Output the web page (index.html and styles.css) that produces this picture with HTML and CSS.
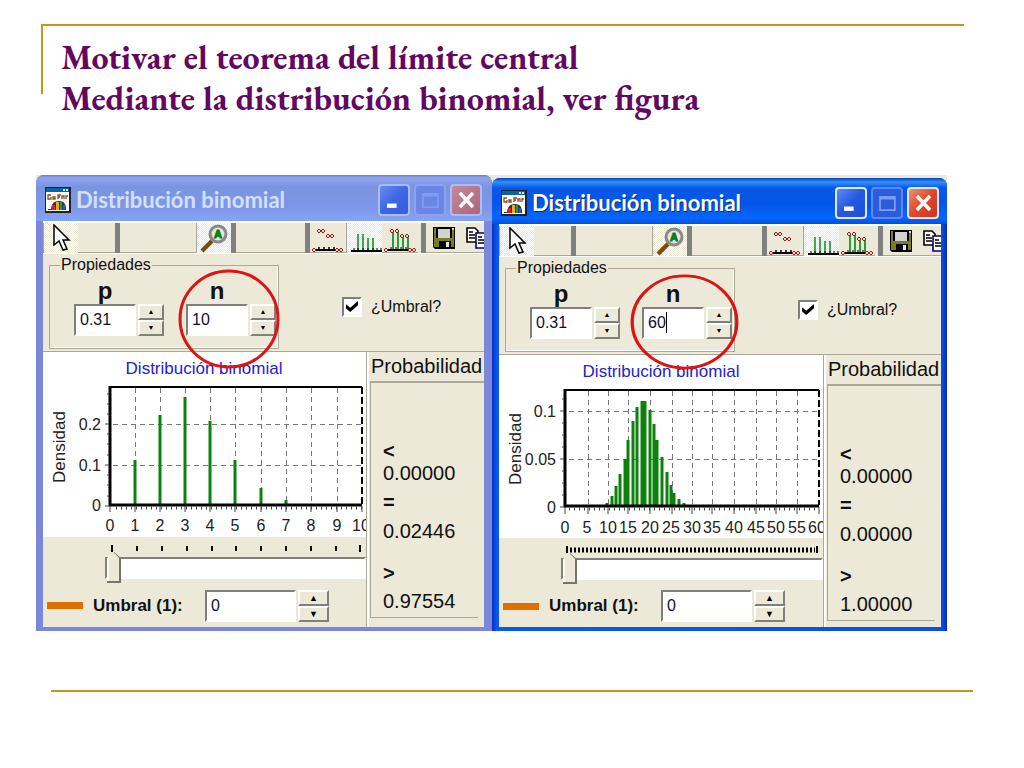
FILE: index.html
```
<!DOCTYPE html>
<html lang="es">
<head>
<meta charset="utf-8">
<title>Distribución binomial</title>
<link rel="stylesheet" href="styles.css">
</head>
<body>

<svg class="defs" width="0" height="0">
<symbol id="app" viewBox="0 0 26 26">
<rect width="26" height="26" fill="#222"/><rect x="1" y="1" width="23" height="23" fill="#fff"/>
<rect x="1" y="1" width="23" height="4" fill="#0a63a5"/><path d="M18 2h2v2h-2zM21 2h2v2h-2z" fill="#cfe4f4"/>
<path d="M6 8H3v4h3v-2M8 10h2v2h-2zM13 12V8h3M13 10h2M17 12v-3h2v3M21 12V9h2" fill="none" stroke="#8a4a26" stroke-width="1.3"/>
<path d="M6 23c0-5 2-9 8-9s7 4 7 9z" fill="#333"/>
<path d="M7 18h3v5H7z" fill="#d22"/><path d="M11 15h3v8h-3z" fill="#e8b020"/><path d="M15 15h2v8h-2z" fill="#2a9a4a"/><path d="M18 18h2v5h-2z" fill="#2a5ad0"/>
<path d="M3 22h3v1H3z" fill="#333"/>
</symbol>
<symbol id="arrow" viewBox="0 0 20 28">
<path d="M3 1v20l5-4 4 9 4-1-4-9h6z" fill="#fff" stroke="#000" stroke-width="1.5"/>
</symbol>
<symbol id="lens" viewBox="0 0 30 30">
<path d="M3 28 13 18" stroke="#7a4a0c" stroke-width="4"/><path d="M2 26 12 16" stroke="#c48a38"/>
<circle cx="19" cy="11" r="8" fill="#e8e8d8" stroke="#888" stroke-width="3"/>
</symbol>
<symbol id="points" viewBox="0 0 34 30">
<path d="M4 27h25" stroke="#000" stroke-width="2"/><path d="M8 24v3M13 24v3M18 24v3M23 24v3" stroke="#000" stroke-width="1.5"/>
<path d="M6 8l2-2 2 2-2 2zM10 8l2-2 2 2-2 2zM15 13l2-2 2 2-2 2zM19 13l2-2 2 2-2 2zM1 27l2-2 2 2-2 2zM24 27l2-2 2 2-2 2zM28 27l2-2 2 2-2 2z" fill="#f4d8cc" stroke="#a01818"/>
</symbol>
<symbol id="stems" viewBox="0 0 34 30">
<path d="M10 11v16M15 11v16M20 15v12M25 15v12" stroke="#18942a" stroke-width="1.6"/>
<path d="M3 28h31" stroke="#000" stroke-width="2"/><path d="M6 25v3M10 25v3M15 25v3M20 25v3M25 25v3M29 25v3M33 25v3" stroke="#000"/>
</symbol>
<symbol id="both" viewBox="0 0 34 30">
<path d="M10 9v17M15 9v17M20 14v12M25 14v12" stroke="#18942a" stroke-width="1.8"/>
<path d="M4 27h25" stroke="#000" stroke-width="2"/><path d="M8 24v3M13 24v3M18 24v3M23 24v3" stroke="#000"/>
<path d="M7 8l2-2 2 2-2 2zM12 8l2-2 2 2-2 2zM17 13l2-2 2 2-2 2zM22 13l2-2 2 2-2 2zM1 27l2-2 2 2-2 2zM25 27l2-2 2 2-2 2zM29 27l2-2 2 2-2 2z" fill="#f4d8cc" stroke="#a01818"/>
</symbol>
<symbol id="save" viewBox="0 0 22 22">
<path d="M0 0h22v22H2l-2-2z" fill="#000"/><path d="M1 1h2v19H1zM19 3h2v17h-2zM3 11h16v2H3z" fill="#7c7c20"/>
<path d="M5 2h12v9H5z" fill="#d2d2d2"/><path d="M3 13h16v7H3z" fill="#7c7c20"/><path d="M6 14h12v7H6z" fill="#000"/><path d="M13 15h3v5h-3z" fill="#e8e8e8"/>
<path d="M19 1h2v2h-2z" fill="#d2d2d2"/>
</symbol>
<symbol id="copy" viewBox="0 0 22 22">
<path d="M1 1h8l3 3v11H1z" fill="#fff" stroke="#000" stroke-width="1.6"/><path d="M3 5h4M3 8h6M3 11h6" stroke="#000" stroke-width="1.4"/>
<path d="M10 6h8l4 4v11H10z" fill="#fff" stroke="#000080" stroke-width="1.6"/><path d="M12 10h4M12 13h8M12 16h8" stroke="#000" stroke-width="1.4"/>
</symbol>
</svg>

<header class="heading">
<h1>Motivar el teorema del límite central<br>Mediante la distribución binomial, ver figura</h1>
</header>

<main class="figure">

<section class="window inactive">
<div class="titlebar">
<svg class="app"><use href="#app"/></svg>
<h2>Distribución binomial</h2>
<button class="cap" aria-label="Minimizar"><svg viewBox="0 0 32 32"><path d="M8 20h11v5H8z" fill="#fff"/></svg></button>
<button class="cap max" aria-label="Maximizar"><svg viewBox="0 0 32 32"><path d="M8 9h17v15H8zM8 11h17" fill="none" stroke="#7f9cf2" stroke-width="2"/></svg></button>
<button class="cap close" aria-label="Cerrar"><svg viewBox="0 0 32 32"><path d="M9 8 24 24M24 8 9 24" stroke="#fff" stroke-width="4"/></svg></button>
</div>
<div class="client">
<div class="toolbar">
<button class="tool on" aria-label="Puntero"><svg class="i-arrow"><use href="#arrow"/></svg></button>
<span class="blank short"></span><span class="sep"></span><span class="blank long"></span>
<button class="tool on" aria-label="Lupa"><svg class="i-lens"><use href="#lens"/><text x="19" y="15">A</text></svg></button>
<span class="sep"></span><span class="blank"></span><span class="sep"></span>
<button class="tool wider" aria-label="Puntos"><svg class="i-graph"><use href="#points"/></svg></button>
<button class="tool wider on" aria-label="Barras"><svg class="i-graph"><use href="#stems"/></svg></button>
<button class="tool wider" aria-label="Puntos y barras"><svg class="i-graph"><use href="#both"/></svg></button>
<span class="sep last"></span>
<button class="tool wider" aria-label="Guardar"><svg class="i-file"><use href="#save"/></svg></button>
<button class="tool half" aria-label="Copiar"><svg class="i-file"><use href="#copy"/></svg></button>
</div>
<div class="props">
<fieldset>
<legend>Propiedades</legend>
<div class="param"><label for="p1">p</label>
<div class="spin"><input id="p1" type="text" value="0.31"><div class="arrows"><button aria-label="Más">▲</button><button aria-label="Menos">▼</button></div></div></div>
<div class="param"><label for="n1">n</label>
<div class="spin"><input id="n1" type="text" value="10"><div class="arrows"><button aria-label="Más">▲</button><button aria-label="Menos">▼</button></div></div></div>
</fieldset>
<label class="check"><input type="checkbox" checked> ¿Umbral?</label>
<svg class="ring" viewBox="0 0 100 100" preserveAspectRatio="none"><ellipse cx="50" cy="50" rx="48" ry="48"/></svg>
</div>
<div class="lower">
<div class="left">
<svg class="chart" viewBox="0 0 324 185" preserveAspectRatio="xMinYMin slice">
<text class="name" x="161" y="22">Distribución binomial</text>
<text class="name dens" transform="translate(22 95) rotate(-90)">Densidad</text>
<path class="grid" d="M92 36V152M117 36V152M142 36V152M167 36V152M192 36V152M218 36V152M243 36V152M268 36V152M294 36V152M70 72H318M70 113H318"/>
<path class="frame" d="M67 35H319"/><path class="frame dash" d="M319 35V152"/>
<path class="bars" d="M92 152V108M117 152V63M142 152V45M167 152V69M192 152V108M218 152V136M243 152V148"/>
<path class="axis" d="M67 34V153H319"/>
<path class="minor" d="M73 156H319"/>
<path class="tick" d="M62 72H66M62 113H66M62 154H66M64 42H66M64 52H66M64 62H66M64 82H66M64 92H66M64 103H66M64 123H66M64 133H66M64 144H66M67 154V160M92 154V160M117 154V160M142 154V160M167 154V160M192 154V160M218 154V160M243 154V160M268 154V160M294 154V160M319 154V160"/>
<g class="ylab"><text x="58" y="78">0.2</text><text x="58" y="119">0.1</text><text x="58" y="159">0</text></g>
<g class="xlab"><text x="67" y="179">0</text><text x="92" y="179">1</text><text x="117" y="179">2</text><text x="142" y="179">3</text><text x="167" y="179">4</text><text x="192" y="179">5</text><text x="218" y="179">6</text><text x="243" y="179">7</text><text x="268" y="179">8</text><text x="294" y="179">9</text><text x="318" y="179">10</text></g>
</svg>
<div class="slider">
<svg class="marks" viewBox="0 0 324 15" preserveAspectRatio="xMinYMin slice"><path d="M69 8v7M94 9v5M119 9v5M144 9v5M169 9v5M193 9v5M218 9v5M243 9v5M268 9v5M293 9v5M317 8v7"/></svg>
<input type="range" min="0" max="10" value="0" aria-label="Umbral">
</div>
<div class="threshold">
<span class="key"></span><label for="u1">Umbral (1):</label>
<div class="spin wide"><input id="u1" type="text" value="0"><div class="arrows"><button aria-label="Más">▲</button><button aria-label="Menos">▼</button></div></div>
</div>
</div>
<div class="prob">
<h3>Probabilidad</h3>
<dl>
<dt>&lt;</dt><dd>0.00000</dd>
<dt class="eq">=</dt><dd class="mid">0.02446</dd>
<dt class="gt">&gt;</dt><dd>0.97554</dd>
</dl>
</div>
</div>
</div>
</section>

<section class="window active">
<div class="titlebar">
<svg class="app"><use href="#app"/></svg>
<h2>Distribución binomial</h2>
<button class="cap" aria-label="Minimizar"><svg viewBox="0 0 32 32"><path d="M8 20h11v5H8z" fill="#fff"/></svg></button>
<button class="cap max" aria-label="Maximizar"><svg viewBox="0 0 32 32"><path d="M8 9h17v15H8zM8 11h17" fill="none" stroke="#7f9cf2" stroke-width="2"/></svg></button>
<button class="cap close" aria-label="Cerrar"><svg viewBox="0 0 32 32"><path d="M9 8 24 24M24 8 9 24" stroke="#fff" stroke-width="4"/></svg></button>
</div>
<div class="client">
<div class="toolbar">
<button class="tool on" aria-label="Puntero"><svg class="i-arrow"><use href="#arrow"/></svg></button>
<span class="blank short"></span><span class="sep"></span><span class="blank long"></span>
<button class="tool on" aria-label="Lupa"><svg class="i-lens"><use href="#lens"/><text x="19" y="15">A</text></svg></button>
<span class="sep"></span><span class="blank"></span><span class="sep"></span>
<button class="tool wider" aria-label="Puntos"><svg class="i-graph"><use href="#points"/></svg></button>
<button class="tool wider on" aria-label="Barras"><svg class="i-graph"><use href="#stems"/></svg></button>
<button class="tool wider" aria-label="Puntos y barras"><svg class="i-graph"><use href="#both"/></svg></button>
<span class="sep last"></span>
<button class="tool wider" aria-label="Guardar"><svg class="i-file"><use href="#save"/></svg></button>
<button class="tool half" aria-label="Copiar"><svg class="i-file"><use href="#copy"/></svg></button>
</div>
<div class="props">
<fieldset>
<legend>Propiedades</legend>
<div class="param"><label for="p2">p</label>
<div class="spin"><input id="p2" type="text" value="0.31"><div class="arrows"><button aria-label="Más">▲</button><button aria-label="Menos">▼</button></div></div></div>
<div class="param"><label for="n2">n</label>
<div class="spin"><input id="n2" type="text" value="60"><span class="caret"></span><div class="arrows"><button aria-label="Más">▲</button><button aria-label="Menos">▼</button></div></div></div>
</fieldset>
<label class="check"><input type="checkbox" checked> ¿Umbral?</label>
<svg class="ring" viewBox="0 0 100 100" preserveAspectRatio="none"><ellipse cx="50" cy="50" rx="48" ry="48"/></svg>
</div>
<div class="lower">
<div class="left">
<svg class="chart" viewBox="0 0 324 183" preserveAspectRatio="xMinYMin slice">
<text class="name" x="162" y="22">Distribución binomial</text>
<text class="name dens" transform="translate(22 94) rotate(-90)">Densidad</text>
<path class="grid" d="M89 36V150M109 36V150M129 36V150M151 36V150M173 36V150M193 36V150M213 36V150M235 36V150M257 36V150M277 36V150M298 36V150M70 56H319M70 104H319"/>
<path class="frame" d="M66 35H320"/><path class="frame dash" d="M320 35V150"/>
<path class="bars" d="M108 150V148M113 150V141M117 150V131M121 150V119M126 150V104M129 150V85M134 150V66M138 150V52M143 150V46M146 150V46M151 150V55M155 150V69M158 150V85M163 150V102M168 150V117M172 150V130M175 150V138M180 150V144M185 150V148"/>
<path class="axis" d="M66 34V151H320"/>
<path class="minor" d="M70 154H320"/>
<path class="tick" d="M61 56H65M61 104H65M61 152H65M63 44H65M63 68H65M63 80H65M63 92H65M63 116H65M63 128H65M63 140H65M66 152V159M89 152V159M109 152V159M129 152V159M151 152V159M173 152V159M193 152V159M213 152V159M235 152V159M257 152V159M277 152V159M298 152V159M320 152V159"/>
<g class="ylab"><text x="57" y="62">0.1</text><text x="57" y="110">0.05</text><text x="57" y="158">0</text></g>
<g class="xlab"><text x="66" y="178">0</text><text x="88" y="178">5</text><text x="109" y="178">10</text><text x="129" y="178">15</text><text x="151" y="178">20</text><text x="172" y="178">25</text><text x="193" y="178">30</text><text x="213" y="178">35</text><text x="235" y="178">40</text><text x="257" y="178">45</text><text x="277" y="178">50</text><text x="298" y="178">55</text><text x="318" y="178">60</text></g>
</svg>
<div class="slider">
<svg class="marks" viewBox="0 0 324 15" preserveAspectRatio="xMinYMin slice"><path d="M68 8v7M318 8v7"/><path class="dense" d="M71 12H316"/></svg>
<input type="range" min="0" max="60" value="0" aria-label="Umbral">
</div>
<div class="threshold">
<span class="key"></span><label for="u2">Umbral (1):</label>
<div class="spin wide"><input id="u2" type="text" value="0"><div class="arrows"><button aria-label="Más">▲</button><button aria-label="Menos">▼</button></div></div>
</div>
</div>
<div class="prob">
<h3>Probabilidad</h3>
<dl>
<dt>&lt;</dt><dd>0.00000</dd>
<dt class="eq">=</dt><dd class="mid">0.00000</dd>
<dt class="gt">&gt;</dt><dd>1.00000</dd>
</dl>
</div>
</div>
</div>
</section>

</main>

<hr class="rule">

</body>
</html>
```
FILE: styles.css
```
*{box-sizing:border-box;}
body{
margin:0;
padding:24px 51px 0 36px;
background:#fff;
color:#111;
font-family:"Liberation Sans", Arial, sans-serif;
font-size:16px;}
button,input{font-family:inherit; font-size:16px; margin:0; padding:0;}
button{border:none; border-radius:0; background:none;}
svg{display:block;}
.defs{position:absolute;}

/* slide heading */
.heading{
height:151px;
margin:0 9px 0 5px;
padding:11px 0 0 20px;
background:linear-gradient(#c09a1c,#c09a1c) 0 0 / 2px 68px no-repeat;
border-top:2px solid #c09a1c;}
h1{
margin:0;
color:#620862;
font-family:"EB Garamond", Garamond, "Liberation Serif", serif;
font-size:34px;
line-height:41px;
font-weight:bold;}
.rule{
height:2px;
margin:59px 0 0 15px;
border:none;
background:#c09a1c;}

/* windows */
.figure{
display:grid;
grid-template-columns:456fr 455fr;
margin-right:26px;
background:#ece9d8;}
.window{
padding:0 8px 4px 7px;
border-radius:8px 8px 0 0;
background:#7b87d8;}
.active{
margin-top:3px;
padding:0 6px 4px 7px;
background:linear-gradient(90deg,#0a30c8,#0a58ec 5px,#0a50e0 450px,#0828b0);}
.titlebar{
display:flex;
align-items:center;
gap:4px;
height:46px;
margin:0 -8px 0 -7px;
padding:4px 10px 0 9px;
border-radius:8px 8px 0 0;
background:linear-gradient(#6a7cc8,#8ea4ee 3px,#7b93e0 12px,#7d98ea 34px,#86a4f4);}
.active .titlebar{
margin-right:-6px;
padding-right:8px;
background:linear-gradient(#0842b8,#3090ff 4px,#0858e6 10px,#0456e6 26px,#0566ff 40px,#0450d8);}
.app{width:26px; height:26px;}
h2{
flex:1;
margin:0;
padding-left:1px;
color:#d4e0fc;
font-family:Lato, "Open Sans", sans-serif;
font-size:22px;
line-height:26px;
font-weight:bold;
white-space:nowrap;}
.active h2{color:#fff; text-shadow:1px 1px #0a2a88;}
.cap{
width:32px;
height:32px;
border:2px solid #a9bdf8;
border-radius:4px;
background:linear-gradient(135deg,#6a8cf0,#3c66e4 50%,#3a5ce0);}
.cap svg{width:28px; height:28px;}
.max{border-color:#8ba2f0; background:#6b85e4;}
.close{background:linear-gradient(135deg,#c08a9c,#b06478);}
.active .cap{border-color:#dfe8ff; background:linear-gradient(135deg,#5c8cf8,#2458e0 50%,#1c50d8);}
.active .max{border-color:#5c88f0; background:#2a5ce0;}
.active .close{background:linear-gradient(135deg,#f09070,#e0482c 50%,#c8381c);}
.client{background:#ece9d8;}

/* toolbar */
.toolbar{
display:flex;
height:33px;
overflow:hidden;
border-top:2px solid #fff;
border-bottom:1px solid #fff;}
.tool{
flex:none;
display:flex;
align-items:center;
justify-content:center;
width:35px;
border-bottom:1px solid #aca899;}
.wider{width:36px;}
.on{
border:none;
border-left:1px solid #aca899;
background:repeating-conic-gradient(#ece9d8 0 25%,#fff 0 50%) 0 0 / 2px 2px;}
.half{width:22px; padding-left:4px; justify-content:flex-start; overflow:hidden;}
.blank{flex:1; border-bottom:1px solid #aca899;}
.short{flex:none; width:37px;}
.long{flex:none; width:76px;}
.sep{flex:none; width:5px; background:#808080;}
.last{margin-left:3px;}
.i-arrow{width:20px; height:28px;}
.i-lens{width:30px; height:30px;}
.i-lens text{
fill:#0a7a1a;
stroke:#0a7a1a;
font-size:11px;
font-weight:bold;
text-anchor:middle;}
.i-graph{width:34px; height:30px;}
.i-file{flex:none; width:22px; height:22px;}

/* properties */
.props{
position:relative;
display:flex;
align-items:flex-start;
gap:63px;
height:98px;
padding-left:6px;
border-bottom:1px solid #aca899;}
fieldset{
display:flex;
gap:22px;
width:230px;
height:95px;
margin:0;
padding:2px 0 0 24px;
border:1px solid #aca899;
box-shadow:inset -1px -1px #fff;}
legend{margin-left:-14px; padding:0 1px; line-height:22px;}
.param label{
display:block;
width:62px;
font-size:24px;
line-height:26px;
font-weight:bold;
text-align:center;}
.spin{position:relative; display:flex; gap:2px; height:32px;}
.spin input{
width:62px;
padding-left:4px;
border:2px solid;
border-color:#808078 #fff #fff #808078;
border-radius:0;
background:#fff;
color:#101030;}
.arrows{display:flex; flex-direction:column; width:26px;}
.arrows button{
flex:1;
border:2px solid;
border-color:#fff #808078 #808078 #fff;
background:#ece9d8;
color:#000;
font-size:7px;
line-height:8px;}
.caret{
position:absolute;
left:24px;
top:5px;
width:1px;
height:21px;
background:#000;}
.check{display:flex; align-items:center; gap:9px; height:20px; margin-top:43px;}
.check input{
appearance:none;
width:20px;
height:20px;
border:2px solid;
border-color:#808078 #fff #fff #808078;
background:#fff;}
.check input:checked::before{
content:"";
display:block;
width:12px;
height:11px;
margin:2px;
background:#000;
clip-path:polygon(0 30%,35% 62%,100% 0,100% 38%,35% 100%,0 68%);}
.ring{
position:absolute;
left:135px;
top:15px;
width:102px;
height:100px;
overflow:visible;
pointer-events:none;}
.ring ellipse{fill:none; stroke:#dc1414; stroke-width:3;}
.active .ring{left:131px; top:17px; width:109px; height:96px;}

/* chart and slider */
.lower{display:flex;}
.left{flex:1; min-width:0; border-right:1px solid #aca899;}
.chart{width:100%; height:185px; background:#fff;}
.active .chart{height:183px;}
.chart text{fill:#222;}
.chart .name{fill:#2222d0; font-size:17px; text-anchor:middle;}
.chart .dens{fill:#222;}
.xlab{text-anchor:middle;}
.ylab{text-anchor:end;}
.grid{fill:none; stroke:#777; stroke-dasharray:5 4; shape-rendering:crispEdges;}
.frame{fill:none; stroke:#000; stroke-width:2;}
.dash{stroke-dasharray:7 3;}
.axis{fill:none; stroke:#000; stroke-width:3;}
.bars{fill:none; stroke:#0c820c; stroke-width:3;}
.tick{fill:none; stroke:#444;}
.minor{stroke:#444; stroke-width:3; stroke-dasharray:1 4;}
.slider{height:47px;}
.marks{width:100%; height:15px;}
.marks path{stroke:#000; stroke-width:2;}
.marks .dense{stroke-width:5; stroke-dasharray:2 2;}
.slider input{
appearance:none;
display:block;
width:calc(100% - 62px);
height:32px;
margin-left:62px;
background:none;}
.slider input::-webkit-slider-runnable-track{
height:22px;
border:2px solid;
border-color:#808078 #fff #fff #808078;
background:#fff;}
.slider input::-webkit-slider-thumb{
appearance:none;
width:14px;
height:31px;
margin-top:-7px;
border:solid #777568;
border-width:0 2px 2px 0;
background:
linear-gradient(225deg,#777568 5px,transparent 6px) border-box,
linear-gradient(90deg,#fff 1px,#ece9d8 2px);
clip-path:polygon(0 20%,50% 0,100% 20%,100% 100%,0 100%);}
.threshold{display:flex; align-items:center; height:43px; padding-left:4px;}
.active .threshold{height:42px;}
.key{width:36px; height:7px; background:#de7000;}
.threshold label{width:112px; margin:0 0 0 10px; font-size:17px; font-weight:bold;}
.wide input{width:91px;}
.wide .arrows{width:31px;}
.wide .arrows button{font-size:9px;}

/* probabilities */
.prob{width:117px; border-left:2px solid #fff; padding-left:1px;}
h3{
margin:0;
padding-left:1px;
border-bottom:2px solid #aca899;
font-size:20px;
line-height:29px;
font-weight:normal;}
dl{
height:235px;
margin:0 6px 0 0;
padding:57px 0 0 12px;
border-left:1px solid #aca899;
border-bottom:1px solid #aca899;
font-size:20px;
line-height:22px;}
dt{font-weight:bold;}
dd{margin:0;}
.eq{margin-top:7px;}
.mid{margin-top:7px;}
.gt{margin-top:20px;}
.gt + dd{margin-top:6px;}
```
